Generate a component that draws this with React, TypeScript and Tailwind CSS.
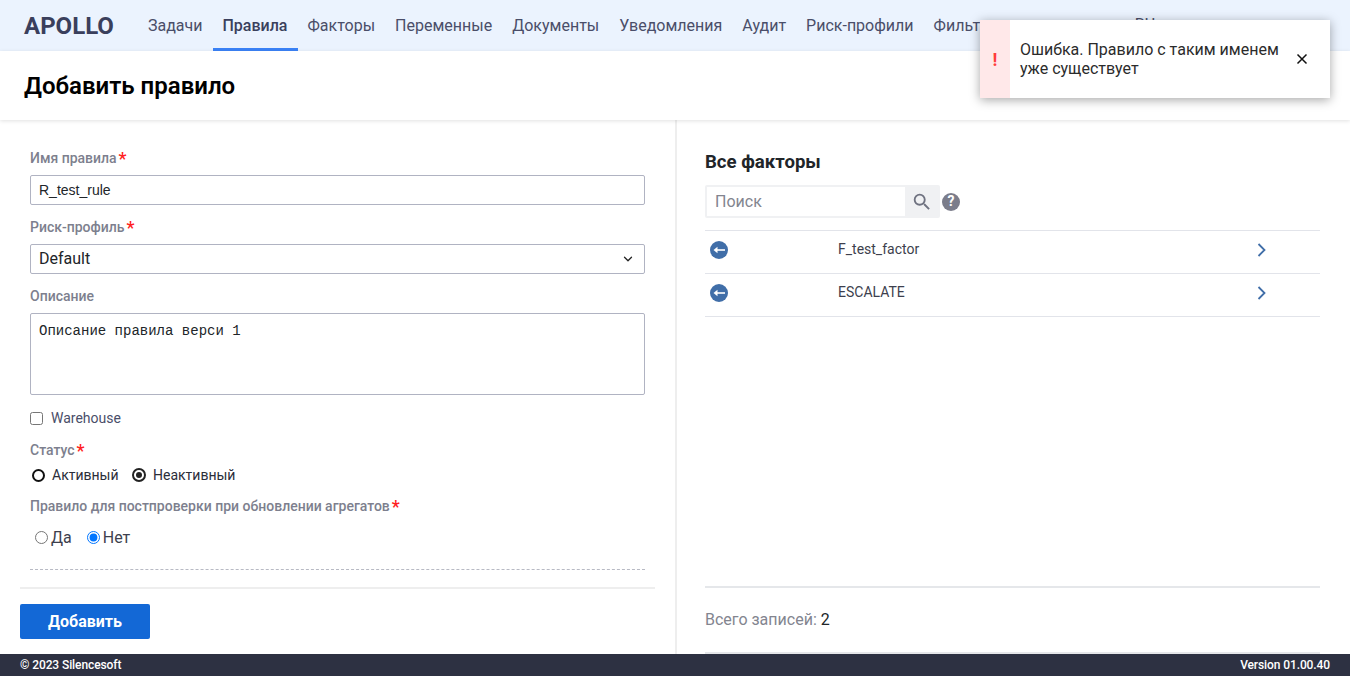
import React from "react";
import { ChevronDown } from "lucide-react";
import { MdSearch } from "react-icons/md";

const navItems = [
  "Задачи",
  "Правила",
  "Факторы",
  "Переменные",
  "Документы",
  "Уведомления",
  "Аудит",
  "Риск-профили",
  "Фильтры",
];

const factors = ["F_test_factor", "ESCALATE"];

function FieldLabel({ text, required }: { text: string; required?: boolean }) {
  return (
    <div className="flex h-[19px] items-center text-[14px] font-medium leading-[19px] text-[#7d7f8e]">
      {text}
      {required && <span className="ml-[2px] text-[18px] leading-[19px] text-[#ff2020]">*</span>}
    </div>
  );
}

function BackIcon() {
  return (
    <svg width="18" height="18" viewBox="0 0 18 18">
      <circle cx="9" cy="9" r="9" fill="#406ea8" />
      <path d="M5 9h10" stroke="#fff" strokeWidth="1.6" />
      <path d="M7.5 5.8 3.5 9l4 3.2z" fill="#fff" />
    </svg>
  );
}

function RowArrow() {
  return (
    <svg className="mr-[54px]" width="9" height="14" viewBox="0 0 9 14" fill="none">
      <path d="M1.5 1l6 6-6 6" stroke="#406ea8" strokeWidth="1.8" />
    </svg>
  );
}

export default function App() {
  return (
    <div className="relative flex h-[676px] w-[1350px] flex-col overflow-hidden bg-white font-['Roboto',sans-serif] text-[#212529]">
      {/* Top nav */}
      <header className="flex h-[51px] shrink-0 items-stretch bg-[#ebf3fe] pl-[24px]">
        <div className="mr-[14px] flex w-[100px] items-center text-[24px] font-bold text-[#3a3f5c]">APOLLO</div>
        <nav className="flex">
          {navItems.map((item) => (
            <div
              key={item}
              className={
                item === "Правила"
                  ? "flex w-[85px] items-center justify-center border-b-[3px] border-[#3b82f6] pt-[3px] text-[16px] font-medium text-[#3a3f5c]"
                  : "flex items-center border-b-[3px] border-transparent px-[10px] pt-[3px] text-[16px] text-[#4a4e69]"
              }
            >
              {item}
            </div>
          ))}
        </nav>
        <div className="ml-auto mr-[195px] flex items-center pb-[1px] text-[16px] text-[#4a4e69]">RU</div>
      </header>

      {/* Page title */}
      <div className="z-10 flex h-[69px] shrink-0 items-center bg-white pl-[24px] shadow-[0_1px_4px_rgba(0,0,0,0.12)]">
        <h1 className="text-[24px] font-semibold text-black">Добавить правило</h1>
      </div>

      <div className="flex min-h-0 flex-1">
        {/* Left form */}
        <div className="flex w-[677px] shrink-0 flex-col border-r-[2px] border-[#eeeeee] pl-[20px] pr-[20px]">
          <div className="flex flex-1 flex-col px-[10px] pt-[29px]">
            <FieldLabel text="Имя правила" required />
            <div className="mt-[7px] flex h-[30px] items-center rounded-[2px] border border-[#b0b3c2] px-[8px] font-['Liberation_Sans',sans-serif] text-[14px] text-[#212529]">
              R_test_rule
            </div>
            <div className="mt-[13px]">
              <FieldLabel text="Риск-профиль" required />
            </div>
            <div className="mt-[7px] flex h-[30px] items-center justify-between rounded-[2px] border border-[#b0b3c2] pl-[8px] pr-[9px] text-[16px] text-[#212529]">
              Default
              <ChevronDown size={14} strokeWidth={2.2} color="#222" />
            </div>
            <div className="mt-[13px]">
              <FieldLabel text="Описание" />
            </div>
            <div className="mt-[7px] h-[82px] rounded-[2px] border border-[#b0b3c2] px-[8px] pt-[9px] font-['Liberation_Mono',monospace] text-[14px] leading-[16px] text-[#212529]">
              Описание правила верси 1
            </div>
            <label className="mt-[15px] flex h-[16px] items-center text-[14px] text-[#4a4e69]">
              <input type="checkbox" className="mr-[8px] h-[13px] w-[13px]" readOnly />
              Warehouse
            </label>
            <div className="mt-[15px]">
              <FieldLabel text="Статус" required />
            </div>
            <div className="mt-[6px] flex h-[18px] items-center text-[14px] text-[#2b2d3a]">
              <span className="ml-[2px] mr-[7px] h-[13px] w-[13px] rounded-full border-[2px] border-[#111]" />
              <span className="w-[67px]">Активный</span>
              <span className="ml-[13px] mr-[7px] flex h-[14px] w-[14px] items-center justify-center rounded-full border-[2px] border-[#222]">
                <span className="h-[6px] w-[6px] rounded-full bg-[#222]" />
              </span>
              Неактивный
            </div>
            <div className="mt-[13px]">
              <FieldLabel text="Правило для постпроверки при обновлении агрегатов" required />
            </div>
            <div className="mt-[12px] flex h-[20px] items-center pl-[5px] text-[16px] text-[#3d3f4d]">
              <input type="radio" name="post" className="mb-[1px] mr-[3px] h-[13px] w-[13px]" readOnly />
              Да
              <input type="radio" name="post" defaultChecked className="mb-[1px] ml-[15px] mr-[3px] h-[13px] w-[13px]" />
              Нет
            </div>
            <div className="mt-[21px] border-t border-dashed border-[#b8bac4]" />
          </div>
          <div className="h-[67px] border-t-[2px] border-[#eeeeee] pt-[15px]">
            <button className="h-[35px] w-[130px] rounded-[2px] bg-[#1368d6] text-[16px] font-bold text-white">
              Добавить
            </button>
          </div>
        </div>

        {/* Right list */}
        <div className="flex min-w-0 flex-1 flex-col pl-[28px] pr-[30px]">
          <h2 className="mt-[30px] text-[18.6px] font-bold leading-[24px] text-[#212529]">Все факторы</h2>
          <div className="mt-[11px] flex items-center">
            <div className="flex h-[33px] w-[235px] rounded-[2px] bg-[#f0f1f3] p-[2px]">
              <div className="flex flex-1 items-center bg-white pl-[8px] text-[16px] text-[#83858f]">Поиск</div>
              <div className="flex w-[33px] items-center justify-center">
                <MdSearch size={22} color="#6f7280" />
              </div>
            </div>
            <div className="ml-[2px] flex h-[18px] w-[18px] items-center justify-center rounded-full bg-[#7b7d8b] text-[14px] font-bold text-white">
              ?
            </div>
          </div>
          <div className="mt-[12px] border-t border-[#e2e4ea]">
            {factors.map((name) => (
              <div key={name} className="flex h-[43px] items-center border-b border-[#e2e4ea] pb-[5px] pl-[5px] text-[14px] text-[#3d3f4d]">
                <BackIcon />
                <div className="ml-[110px] flex-1">{name}</div>
                <RowArrow />
              </div>
            ))}
          </div>
          <div className="flex-1" />
          <div className="flex h-[68px] items-center border-y-[2px] border-[#e5e7ea] text-[16px] text-[#83858f]">
            Всего записей:&nbsp;<span className="text-[#212529]">2</span>
          </div>
        </div>
      </div>

      {/* Footer */}
      <footer className="flex h-[22px] shrink-0 items-center justify-between bg-[#2d3142] px-[20px] text-[12px] font-medium tracking-[-0.1px] text-white">
        <span>© 2023 Silencesoft</span>
        <span>Version 01.00.40</span>
      </footer>

      {/* Error toast */}
      <div className="absolute left-[980px] top-[20px] z-20 flex h-[78px] w-[350px] bg-white shadow-[0_2px_10px_rgba(0,0,0,0.35)]">
        <div className="flex w-[30px] items-center justify-center bg-[#ffe8e9] text-[18px] font-bold text-[#ff3b3b]">!</div>
        <div className="w-[272px] pl-[10px] pt-[20px] text-[16px] leading-[19px] text-[#2b2b2b]">
          Ошибка. Правило с таким именем уже существует
        </div>
        <div className="flex flex-1 items-center pl-[14px]">
          <svg width="12" height="12" viewBox="0 0 12 12" fill="none">
            <path d="M1.5 1.5l9 9M10.5 1.5l-9 9" stroke="#111" strokeWidth="1.5" />
          </svg>
        </div>
      </div>
    </div>
  );
}
